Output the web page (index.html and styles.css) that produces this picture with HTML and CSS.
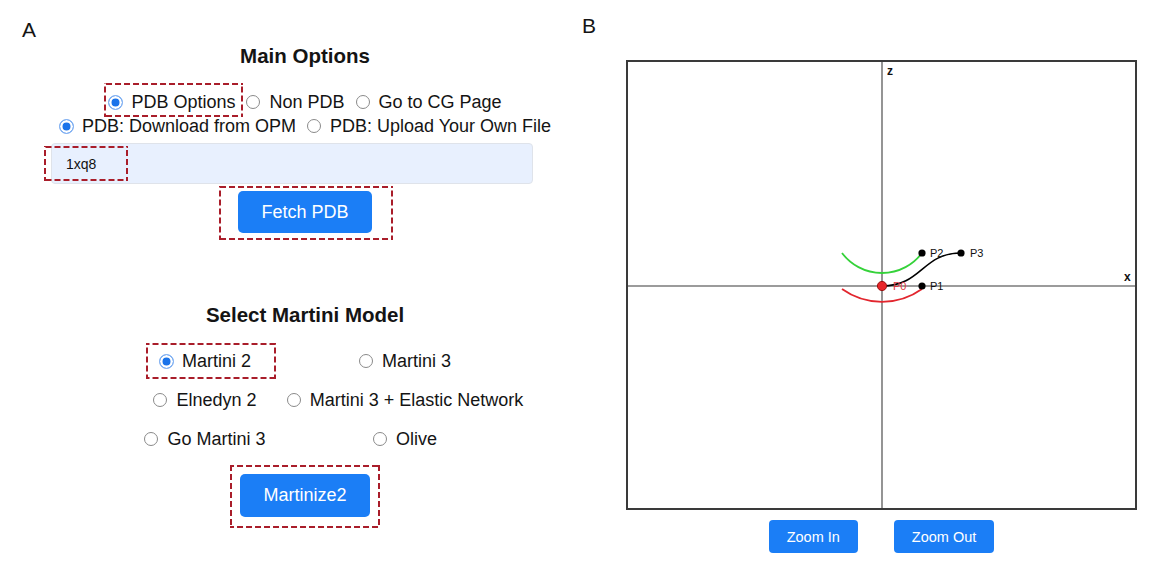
FILE: index.html
```html
<!DOCTYPE html>
<html lang="en">
<head>
    <meta charset="UTF-8">
    <meta name="viewport" content="width=device-width, initial-scale=1.0">
    <title>Martini Setup</title>
    <link rel="stylesheet" href="styles.css">
</head>
<body>
    <div class="figure">
        <!-- Panel A: options form -->
        <section class="panel panel-a">
            <div class="panel-label">A</div>
            <div class="form-col">
                <h3 class="section-title">Main Options</h3>

                <div class="radio-row first-row">
                    <label class="choice mark mark-pdb"><input type="radio" name="mode" checked> PDB Options</label>
                    <label class="choice"><input type="radio" name="mode"> Non PDB</label>
                    <label class="choice"><input type="radio" name="mode"> Go to CG Page</label>
                </div>
                <div class="radio-row">
                    <label class="choice"><input type="radio" name="source" checked> PDB: Download from OPM</label>
                    <label class="choice"><input type="radio" name="source"> PDB: Upload Your Own File</label>
                </div>

                <div class="input-wrap mark mark-id">
                    <input type="text" class="pdb-input" value="1xq8">
                </div>

                <div class="btn-line">
                    <span class="mark mark-fetch"><button class="btn-primary">Fetch PDB</button></span>
                </div>

                <h3 class="section-title model-title">Select Martini Model</h3>

                <div class="model-grid">
                    <label class="choice mark mark-m2"><input type="radio" name="model" checked> Martini 2</label>
                    <label class="choice"><input type="radio" name="model"> Martini 3</label>
                    <label class="choice"><input type="radio" name="model"> Elnedyn 2</label>
                    <label class="choice"><input type="radio" name="model"> Martini 3 + Elastic Network</label>
                    <label class="choice"><input type="radio" name="model"> Go Martini 3</label>
                    <label class="choice"><input type="radio" name="model"> Olive</label>
                </div>

                <div class="btn-line run-line">
                    <span class="mark mark-run"><button class="btn-primary">Martinize2</button></span>
                </div>
            </div>
        </section>

        <!-- Panel B: curve editor -->
        <section class="panel panel-b">
            <div class="panel-label">B</div>
            <div class="plot">
                <svg width="507" height="446" viewBox="0 0 507 446">
                    <line x1="254" y1="0" x2="254" y2="446" class="axis"/>
                    <line x1="0" y1="224" x2="507" y2="224" class="axis"/>
                    <text x="259" y="13" class="axis-label">z</text>
                    <text x="496" y="219" class="axis-label">x</text>

                    <path d="M214,191 A50,50 0 0 0 294,191" class="arc-green"/>
                    <path d="M214,227 A68.8,68.8 0 0 0 294,227" class="arc-red"/>
                    <path d="M254,224 C294,224 294,191 333,191" class="curve"/>

                    <circle cx="294" cy="224" r="3.6" class="pt"/>
                    <circle cx="294" cy="191" r="3.6" class="pt"/>
                    <circle cx="333" cy="191" r="3.6" class="pt"/>
                    <circle cx="254" cy="224" r="4.6" class="pt-origin"/>

                    <text x="265" y="228" class="pt-label origin">P0</text>
                    <text x="302" y="228" class="pt-label">P1</text>
                    <text x="302" y="195" class="pt-label">P2</text>
                    <text x="342" y="195" class="pt-label">P3</text>
                </svg>
            </div>
            <div class="zoom-bar">
                <button class="btn-small">Zoom In</button>
                <button class="btn-small">Zoom Out</button>
            </div>
        </section>
    </div>
</body>
</html>
```

FILE: styles.css
```css
body {
    margin: 0;
    font-family: "Liberation Sans", Arial, sans-serif;
    color: #141414;
    background-color: white;
}
.figure {
    display: flex;
    width: 1150px;
    height: 564px;
}
.panel {
    width: 575px;
    box-sizing: border-box;
}
.panel-label {
    font-size: 21px;
    line-height: 24px;
}
.panel-a {
    padding-top: 18px;
}
.panel-a .panel-label {
    padding-left: 22px;
}
.form-col {
    margin-left: 35px;
    width: 540px;
}
.section-title {
    margin: 2px 0 0;
    font-size: 20.5px;
    line-height: 24px;
    text-align: center;
}
.model-title {
    margin-top: 70px;
}

/* radios */
.radio-row {
    display: flex;
    justify-content: center;
    gap: 11px;
}
.first-row {
    margin-top: 22px;
}
.choice {
    display: inline-flex;
    align-items: center;
    font-size: 18px;
    line-height: 24px;
    white-space: nowrap;
}
.choice input {
    appearance: none;
    -webkit-appearance: none;
    width: 14px;
    height: 14px;
    margin: 0 9px 0 0;
    border: 1px solid #8a8a8a;
    border-radius: 50%;
    background-color: white;
    box-sizing: border-box;
}
.choice input:checked {
    width: 15px;
    height: 15px;
    margin-right: 8px;
    border-color: #86b3f2;
    background-color: #1a73ea;
    box-shadow: inset 0 0 0 2.5px white;
}

.input-wrap {
    margin: 5px 0 0 16px;
    width: 482px;
}
.pdb-input {
    display: block;
    width: 100%;
    height: 41px;
    padding: 0 14px;
    border: 1px solid #dfe3ea;
    border-radius: 4px;
    background-color: #e8f0fe;
    font-family: inherit;
    font-size: 14px;
    color: #111;
    box-sizing: border-box;
}

.btn-line {
    display: flex;
    justify-content: center;
    margin-top: 7px;
}
.run-line {
    margin-top: 23px;
}
.btn-primary {
    display: block;
    height: 42px;
    padding: 0 23px;
    border: none;
    border-radius: 5px;
    background-color: #1b7ef6;
    color: white;
    font-family: inherit;
    font-size: 18px;
}
.run-line .btn-primary {
    height: 43px;
}

.model-grid {
    display: grid;
    grid-template-columns: 200px 200px;
    justify-items: center;
    row-gap: 15px;
    width: 400px;
    margin: 22px auto 0;
}

/* red dashed annotation boxes */
.mark {
    position: relative;
}
.mark::after {
    content: "";
    position: absolute;
    pointer-events: none;
    background:
        linear-gradient(90deg, #a91d2a 70%, transparent 0) top / 9px 2px repeat-x,
        linear-gradient(90deg, #a91d2a 70%, transparent 0) bottom / 9px 2px repeat-x,
        linear-gradient(180deg, #a91d2a 70%, transparent 0) left / 2px 9px repeat-y,
        linear-gradient(180deg, #a91d2a 70%, transparent 0) right / 2px 9px repeat-y;
}
.mark-pdb::after {
    top: -7px;
    right: -8px;
    bottom: -3px;
    left: -4px;
}
.mark-id::after {
    top: 3px;
    left: -7px;
    width: 84px;
    height: 35px;
}
.mark-fetch::after {
    top: -5px;
    right: -21px;
    bottom: -7px;
    left: -19px;
}
.mark-m2::after {
    top: -6px;
    right: -25px;
    bottom: -6px;
    left: -13px;
}
.mark-run::after {
    top: -9px;
    right: -10px;
    bottom: -11px;
    left: -10px;
}

/* panel B */
.panel-b {
    padding-top: 14px;
}
.panel-b .panel-label {
    padding-left: 7px;
}
.plot {
    width: 511px;
    height: 450px;
    margin: 22px 0 0 51px;
    border: 2px solid #3a3a3a;
    box-sizing: border-box;
}
.plot svg {
    display: block;
}
.axis {
    stroke: #7a7a7a;
    stroke-width: 1.6;
}
.axis-label {
    font-size: 12px;
    font-weight: bold;
    fill: #111;
}
.arc-green {
    fill: none;
    stroke: #35d23a;
    stroke-width: 1.8;
}
.arc-red {
    fill: none;
    stroke: #e2262e;
    stroke-width: 1.8;
}
.curve {
    fill: none;
    stroke: #000;
    stroke-width: 1.6;
}
.pt {
    fill: #000;
}
.pt-origin {
    fill: #e8262a;
    stroke: #9a1010;
    stroke-width: 1;
}
.pt-label {
    font-size: 11px;
    fill: #111;
}
.pt-label.origin {
    fill: #e0393d;
}
.zoom-bar {
    display: flex;
    justify-content: center;
    gap: 36px;
    width: 511px;
    margin: 10px 0 0 51px;
}
.btn-small {
    height: 33px;
    padding: 0 18px;
    border: none;
    border-radius: 4px;
    background-color: #1b7ef6;
    color: white;
    font-family: inherit;
    font-size: 14.5px;
}
```
